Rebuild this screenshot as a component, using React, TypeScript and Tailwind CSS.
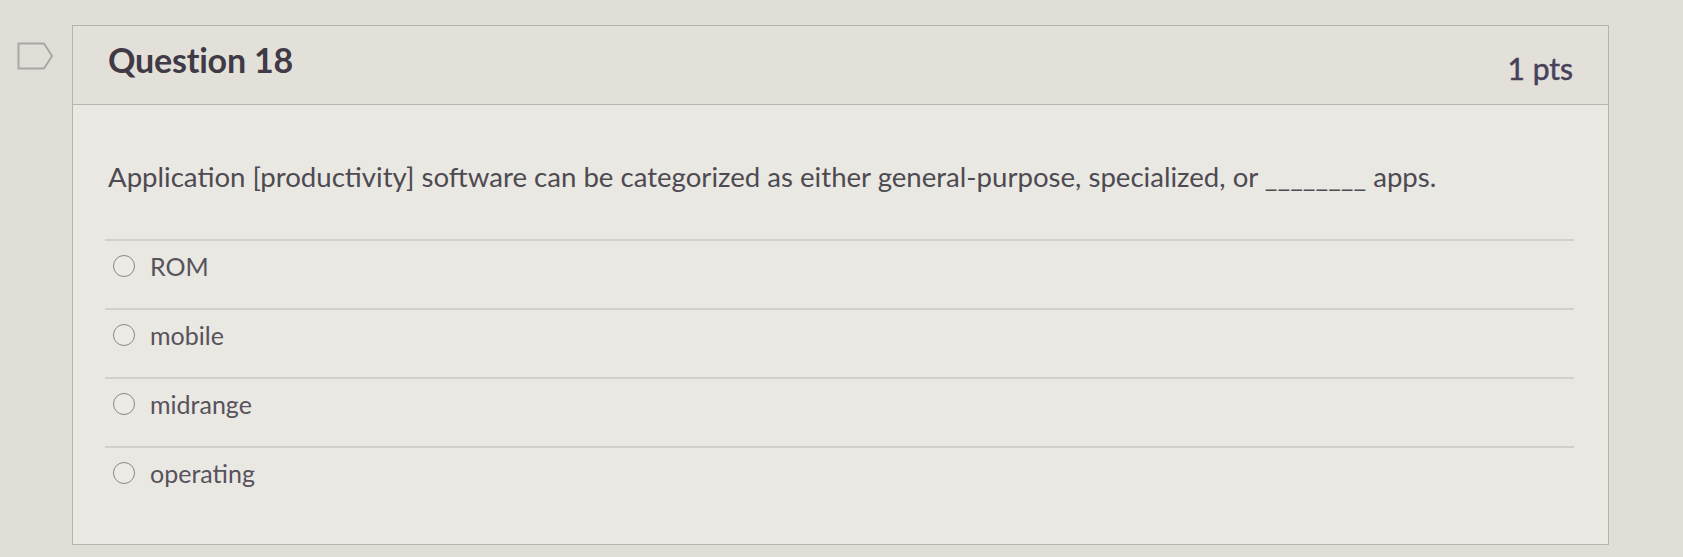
import React from "react";

const options = ["ROM", "mobile", "midrange", "operating"];

function Flag() {
  return (
    <svg width="37" height="28" viewBox="0 0 37 28" fill="none">
      <path d="M1.5 1.5 H27 L35 14 L27 26.5 H1.5 Z" stroke="#a7a9a8" strokeWidth="2" strokeLinejoin="round" />
    </svg>
  );
}

export default function App() {
  return (
    <div className="w-full h-[557px] bg-[#e1ded7] flex overflow-hidden" style={{ fontFamily: "Lato, 'Open Sans', sans-serif" }}>
      <div className="w-[72px] shrink-0 flex justify-start pl-[17px] pt-[42px]">
        <Flag />
      </div>
      <div className="w-[1537px] mt-[25px] mb-[12px] border border-[#b7b4ae] bg-[#eae8e2] flex flex-col">
        <div className="h-[79px] shrink-0 bg-[#e3e0d9] border-b border-[#b9b6b0] flex items-center justify-between pl-[35px] pr-[35px]">
          <div className="text-[34px] font-bold text-[#3f3a46] tracking-[-0.2px] -mt-[12px]">Question 18</div>
          <div className="text-[30px] font-normal text-[#47415a] pt-[6px]" style={{ WebkitTextStroke: "0.5px #47415a" }}>1 pts</div>
        </div>
        <div className="flex flex-col pl-[32px] pr-[34px]">
          <div className="pl-[3px] pt-[55px] pb-[45px] text-[27.6px] leading-[34px] text-[#4e4a52]">
            Application [productivity] software can be categorized as either general-purpose, specialized, or ________ apps.
          </div>
          {options.map((o) => (
            <div key={o} className="border-t-2 border-[#d3d0c9] h-[69px] flex items-start gap-[15px] pl-[8px] pt-[10px]">
              <div className="h-[30px] flex items-center">
                <div className="w-[22px] h-[22px] rounded-full border-[1.5px] border-[#8a8690] bg-[#ecebe5]" />
              </div>
              <div className="text-[25px] leading-[30px] text-[#57525c]">{o}</div>
            </div>
          ))}
        </div>
      </div>
    </div>
  );
}
